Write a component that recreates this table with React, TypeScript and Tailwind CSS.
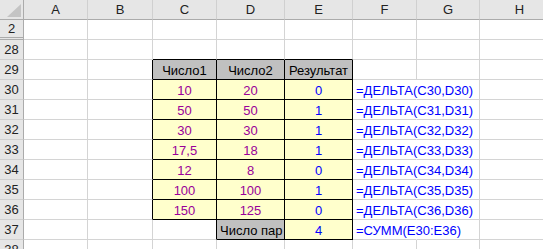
import React from 'react';

type Cell = {
  v?: string;
  bg?: string;
  color?: string;
  align?: 'left' | 'center';
  spill?: boolean;
};

const COLS = ['A', 'B', 'C', 'D', 'E', 'F', 'G', 'H'];

const num = (v: string): Cell => ({ v, bg: 'bg-[#ffffcc]', color: 'text-[#990099]', align: 'center' });
const res = (v: string): Cell => ({ v, bg: 'bg-[#ffffcc]', color: 'text-[#0000ff]', align: 'center' });
const head = (v: string, align: 'left' | 'center' = 'center'): Cell => ({ v, bg: 'bg-[#c0c0c0]', color: 'text-black', align });
const formula = (v: string): Cell => ({ v, color: 'text-[#0000ff]', align: 'left', spill: true });

const pairs: [string, string, string][] = [
  ['10', '20', '0'],
  ['50', '50', '1'],
  ['30', '30', '1'],
  ['17,5', '18', '1'],
  ['12', '8', '0'],
  ['100', '100', '1'],
  ['150', '125', '0'],
];

const rows: { n: number; cells: Cell[] }[] = [
  { n: 2, cells: [{}, {}, {}, {}, {}, {}, {}, {}] },
  { n: 28, cells: [{}, {}, {}, {}, {}, {}, {}, {}] },
  { n: 29, cells: [{}, {}, head('Число1'), head('Число2'), head('Результат'), {}, {}, {}] },
  ...pairs.map(([a, b, r], i) => ({
    n: 30 + i,
    cells: [{}, {}, num(a), num(b), res(r), formula(`=ДЕЛЬТА(C${30 + i},D${30 + i})`), {}, {}],
  })),
  { n: 37, cells: [{}, {}, {}, head('Число пар', 'left'), res('4'), formula('=СУММ(E30:E36)'), {}, {}] },
  { n: 38, cells: [{}, {}, {}, {}, {}, {}, {}, {}] },
];

// cells inside the black outlined block
function boxed(n: number, c: number) {
  if (n >= 29 && n <= 36) return c >= 2 && c <= 4;
  if (n === 37) return c === 3 || c === 4;
  return false;
}

function App() {
  return (
    <div className="w-[543px] h-[249px] overflow-hidden bg-white font-['Liberation_Sans',Arial,sans-serif] text-[13px]">
      <div className="grid grid-cols-[24px_64px_65px_64px_68px_68px_64px_63px_80px] auto-rows-[20px] w-[560px]">
        {/* corner */}
        <div className="relative bg-[#e6e6e6] border-r border-b border-[#ababab]">
          <svg className="absolute right-[2px] bottom-[2px]" width="14" height="13" viewBox="0 0 14 13">
            <polygon points="14,0 14,13 0,13" fill="#c4c4c4" />
          </svg>
        </div>
        {COLS.map((c) => (
          <div
            key={c}
            className="bg-[#e6e6e6] border-b border-b-[#ababab] border-r border-r-[#d0d0d0] flex items-center justify-center text-[#222] leading-none"
          >
            {c}
          </div>
        ))}

        {rows.map((row, ri) => {
          const next = rows[ri + 1];
          return (
            <React.Fragment key={row.n}>
              <div
                className={
                  'bg-[#e6e6e6] border-r border-r-[#ababab] flex items-center justify-center text-[#222] leading-none ' +
                  (row.n === 2 ? 'border-b-[3px] border-double border-b-[#ababab]' : 'border-b border-b-[#d0d0d0]')
                }
              >
                {row.n}
              </div>
              {row.cells.map((cell, ci) => {
                const rightBlack = boxed(row.n, ci) || boxed(row.n, ci + 1);
                const bottomBlack = boxed(row.n, ci) || (next ? boxed(next.n, ci) : false);
                const right = rightBlack
                  ? 'border-r-black'
                  : cell.spill
                  ? 'border-r-transparent'
                  : 'border-r-[#d4d4d4]';
                const bottom = bottomBlack ? 'border-b-black' : 'border-b-[#d4d4d4]';
                return (
                  <div
                    key={ci}
                    className={[
                      'border-r border-b flex items-center leading-none whitespace-nowrap pt-[1px]',
                      right,
                      bottom,
                      cell.bg ?? 'bg-white',
                      cell.color ?? 'text-black',
                      cell.align === 'left' ? 'justify-start pl-[3px]' : 'justify-center',
                      cell.spill ? 'overflow-visible relative z-10' : 'overflow-hidden',
                    ].join(' ')}
                  >
                    {cell.v}
                  </div>
                );
              })}
            </React.Fragment>
          );
        })}
      </div>
    </div>
  );
}

export default App;
